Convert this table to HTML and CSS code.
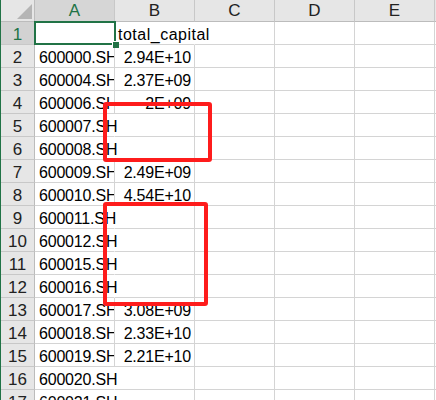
FILE: index.html
```html
<!DOCTYPE html>
<html>
<head>
<meta charset="utf-8">
<link rel="stylesheet" href="styles.css">
</head>
<body>
<div class="window">
  <div class="sheet">
    <div class="corner"><span class="tri"></span></div>
    <div class="ch sel">A</div>
    <div class="ch">B</div>
    <div class="ch">C</div>
    <div class="ch">D</div>
    <div class="ch">E</div>
    <div class="ch last"></div>

    <div class="rh sel">1</div><div class="c"></div><div class="c ov txt">total_capital</div><div class="c nol"></div><div class="c"></div><div class="c"></div><div class="c last"></div>
    <div class="rh">2</div><div class="c">600000.SH</div><div class="c num">2.94E+10</div><div class="c"></div><div class="c"></div><div class="c"></div><div class="c last"></div>
    <div class="rh">3</div><div class="c">600004.SH</div><div class="c num">2.37E+09</div><div class="c"></div><div class="c"></div><div class="c"></div><div class="c last"></div>
    <div class="rh">4</div><div class="c">600006.SH</div><div class="c num">2E+09</div><div class="c"></div><div class="c"></div><div class="c"></div><div class="c last"></div>
    <div class="rh">5</div><div class="c ov">600007.SH</div><div class="c"></div><div class="c"></div><div class="c"></div><div class="c"></div><div class="c last"></div>
    <div class="rh">6</div><div class="c ov">600008.SH</div><div class="c"></div><div class="c"></div><div class="c"></div><div class="c"></div><div class="c last"></div>
    <div class="rh">7</div><div class="c">600009.SH</div><div class="c num">2.49E+09</div><div class="c"></div><div class="c"></div><div class="c"></div><div class="c last"></div>
    <div class="rh">8</div><div class="c">600010.SH</div><div class="c num">4.54E+10</div><div class="c"></div><div class="c"></div><div class="c"></div><div class="c last"></div>
    <div class="rh">9</div><div class="c ov">600011.SH</div><div class="c"></div><div class="c"></div><div class="c"></div><div class="c"></div><div class="c last"></div>
    <div class="rh">10</div><div class="c ov">600012.SH</div><div class="c"></div><div class="c"></div><div class="c"></div><div class="c"></div><div class="c last"></div>
    <div class="rh">11</div><div class="c ov">600015.SH</div><div class="c"></div><div class="c"></div><div class="c"></div><div class="c"></div><div class="c last"></div>
    <div class="rh">12</div><div class="c ov">600016.SH</div><div class="c"></div><div class="c"></div><div class="c"></div><div class="c"></div><div class="c last"></div>
    <div class="rh">13</div><div class="c">600017.SH</div><div class="c num">3.08E+09</div><div class="c"></div><div class="c"></div><div class="c"></div><div class="c last"></div>
    <div class="rh">14</div><div class="c">600018.SH</div><div class="c num">2.33E+10</div><div class="c"></div><div class="c"></div><div class="c"></div><div class="c last"></div>
    <div class="rh">15</div><div class="c">600019.SH</div><div class="c num">2.21E+10</div><div class="c"></div><div class="c"></div><div class="c"></div><div class="c last"></div>
    <div class="rh">16</div><div class="c ov">600020.SH</div><div class="c"></div><div class="c"></div><div class="c"></div><div class="c"></div><div class="c last"></div>
    <div class="rh">17</div><div class="c ov">600021.SH</div><div class="c"></div><div class="c"></div><div class="c"></div><div class="c"></div><div class="c last"></div>
  </div>
  <div class="selection"><span class="handle"></span></div>
  <div class="mark mark1"></div>
  <div class="mark mark2"></div>
</div>
</body>
</html>
```

FILE: styles.css
```css
html, body {
  margin: 0;
  padding: 0;
  background: #ffffff;
  overflow: hidden;
}
.window {
  position: relative;
  width: 436px;
  height: 400px;
  overflow: hidden;
  border-left: 1px solid #217346;
  box-sizing: border-box;
  font-family: "Liberation Sans", Arial, sans-serif;
  font-size: 16px;
  color: #000;
}
.sheet {
  display: grid;
  grid-template-columns: 34px 80px 80px 80px 80px 80px 40px;
  grid-template-rows: 22px;
  grid-auto-rows: 23px;
}
.sheet > div {
  box-sizing: border-box;
  border-right: 1px solid #d4d4d4;
  border-bottom: 1px solid #d4d4d4;
  white-space: nowrap;
}
.corner {
  position: relative;
  background: #e6e6e6;
  border-right-color: #bcbcbc !important;
  border-bottom-color: #bcbcbc !important;
}
.tri {
  position: absolute;
  right: 2px;
  bottom: 2px;
  width: 15px;
  height: 15px;
  background: #b5b5b5;
  clip-path: polygon(100% 0, 100% 100%, 0 100%);
}
.ch {
  background: #e6e6e6;
  border-right-color: #c8c8c8 !important;
  border-bottom-color: #bcbcbc !important;
  text-align: center;
  line-height: 21px;
  font-size: 17px;
  color: #222;
}
.ch.sel {
  background: #d6d6d6;
  color: #217346;
}
.rh {
  background: #e6e6e6;
  border-right-color: #bcbcbc !important;
  border-bottom-color: #c8c8c8 !important;
  text-align: center;
  line-height: 23px;
  padding-top: 1px;
  font-size: 17px;
  color: #222;
}
.rh.sel {
  background: #d2d2d2;
  color: #217346;
}
.c {
  overflow: hidden;
  line-height: 23px;
  padding: 1px 3px 0 4px;
  letter-spacing: -0.2px;
}
.c.txt {
  letter-spacing: 0.5px;
  padding-left: 3px;
}
.c.ov {
  overflow: visible;
  border-right-color: transparent !important;
}
.c.num {
  text-align: right;
}
.selection {
  position: absolute;
  left: 33px;
  top: 21px;
  width: 82px;
  height: 24px;
  box-sizing: border-box;
  border: 2px solid #217346;
}
.handle {
  position: absolute;
  right: -5px;
  bottom: -5px;
  width: 6px;
  height: 6px;
  background: #217346;
  border: 1px solid #fff;
  border-right: none;
  border-bottom: none;
}
.mark {
  position: absolute;
  box-sizing: border-box;
  border: 4px solid #fe1c1c;
  border-radius: 3px;
}
.mark1 {
  left: 102px;
  top: 102px;
  width: 109px;
  height: 60px;
}
.mark2 {
  left: 102px;
  top: 202px;
  width: 105px;
  height: 104px;
}
```
